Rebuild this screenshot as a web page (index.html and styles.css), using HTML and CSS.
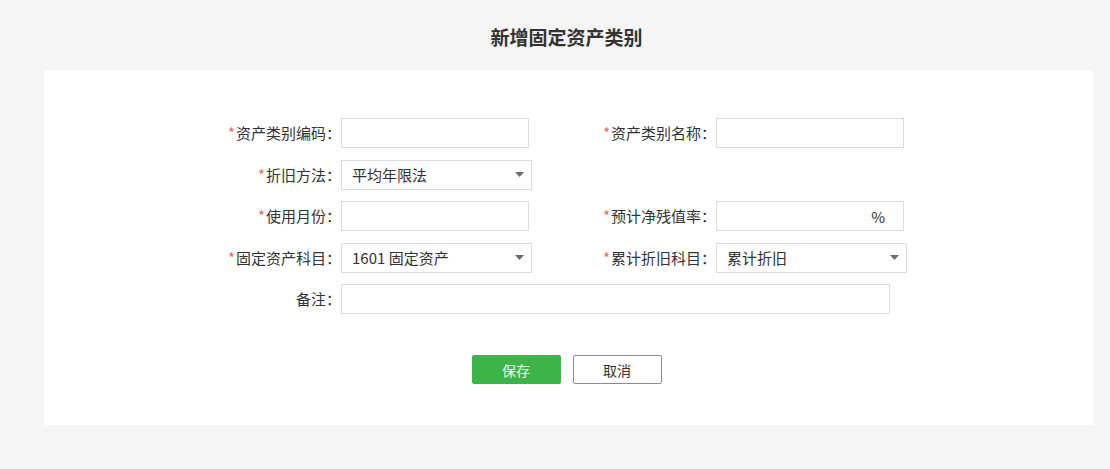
FILE: index.html
```html
<!DOCTYPE html>
<html lang="zh-CN">
<head>
<meta charset="utf-8">
<title>新增固定资产类别</title>
<link rel="stylesheet" href="styles.css">
</head>
<body>
<h1 class="title">新增固定资产类别</h1>
<div class="panel">
  <div class="form">
    <div class="row">
      <label class="lbl"><span class="req">*</span>资产类别编码：</label>
      <div class="field input"></div>
      <label class="lbl"><span class="req">*</span>资产类别名称：</label>
      <div class="field input"></div>
    </div>
    <div class="row">
      <label class="lbl"><span class="req">*</span>折旧方法：</label>
      <div class="field select"><span>平均年限法</span><svg class="arrow" width="9" height="5" viewBox="0 0 9 5"><path d="M0 0h9L4.5 5z" fill="#6b6b6b"/></svg></div>
    </div>
    <div class="row">
      <label class="lbl"><span class="req">*</span>使用月份：</label>
      <div class="field input"></div>
      <label class="lbl"><span class="req">*</span>预计净残值率：</label>
      <div class="field input pct"><span>%</span></div>
    </div>
    <div class="row">
      <label class="lbl"><span class="req">*</span>固定资产科目：</label>
      <div class="field select"><span>1601 固定资产</span><svg class="arrow" width="9" height="5" viewBox="0 0 9 5"><path d="M0 0h9L4.5 5z" fill="#6b6b6b"/></svg></div>
      <label class="lbl"><span class="req">*</span>累计折旧科目：</label>
      <div class="field select"><span>累计折旧</span><svg class="arrow" width="9" height="5" viewBox="0 0 9 5"><path d="M0 0h9L4.5 5z" fill="#6b6b6b"/></svg></div>
    </div>
    <div class="row">
      <label class="lbl">备注：</label>
      <div class="field input wide"></div>
    </div>
  </div>
  <div class="actions">
    <button class="btn btn-save">保存</button>
    <button class="btn btn-cancel">取消</button>
  </div>
</div>
</body>
</html>
```
FILE: styles.css
```css
* { box-sizing: border-box; }
html, body { margin: 0; padding: 0; }
body {
  background: #f5f5f5;
  font-family: "Noto Sans CJK SC", "Microsoft YaHei", sans-serif;
  color: #333;
  width: 1110px;
  height: 469px;
  overflow: hidden;
}
.title {
  margin: 0;
  height: 70px;
  line-height: 74px;
  text-align: center;
  font-size: 19px;
  font-weight: bold;
  color: #333;
  padding-left: 23px;
}
.panel {
  margin-left: 44px;
  width: 1049px;
  height: 355px;
  background: #fff;
  padding-top: 48px;
}
.form {
  padding-left: 157px;
}
.row {
  display: flex;
  align-items: center;
  height: 30px;
  margin-bottom: 11.5px;
}
.row:last-child { margin-bottom: 0; }
.lbl {
  font-size: 15px;
  color: #333;
  text-align: right;
  white-space: nowrap;
  line-height: 30px;
}
.row .lbl:first-child { width: 140px; }
.row .lbl:nth-child(3) { width: 184px; }
.req { color: #e46a6a; margin-right: 1px; }
.field {
  height: 30px;
  border: 1px solid #dcdcdc;
  background: #fff;
  font-size: 15px;
  color: #333;
  display: flex;
  align-items: center;
  flex-shrink: 0;
}
.input { width: 188px; }
.row .input + .lbl { width: 187px !important; }
.select {
  width: 191px;
  padding: 0 7px 0 10px;
  justify-content: space-between;
}
.pct { justify-content: flex-end; padding-right: 18px; }
.wide { width: 549px; }
.arrow { display: block; }
.actions {
  display: flex;
  justify-content: center;
  gap: 12px;
  margin-top: 41px;
  padding-right: 4px;
}
.btn {
  width: 89px;
  height: 29px;
  font-family: inherit;
  font-size: 14px;
  border-radius: 2px;
  padding: 0;
  cursor: pointer;
}
.btn-save {
  background: #3db449;
  border: 1px solid #3db449;
  color: #f1fbef;
}
.btn-cancel {
  background: #fff;
  border: 1px solid #8c8c8c;
  color: #333;
}
```
